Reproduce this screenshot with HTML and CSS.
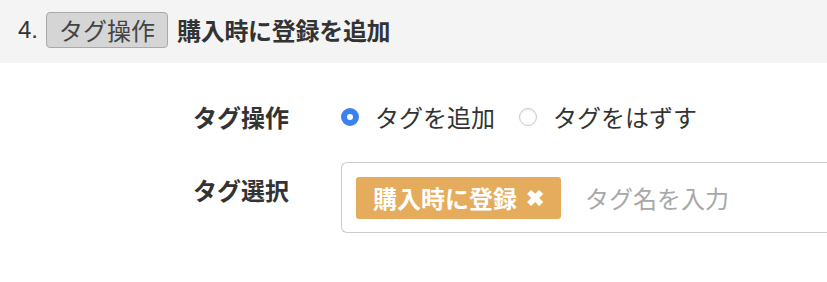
FILE: index.html
```html
<!DOCTYPE html>
<html lang="ja">
<head>
<meta charset="utf-8">
<link rel="stylesheet" href="styles.css">
</head>
<body>
<div class="header">
  <span class="num">4.</span>
  <span class="btn">タグ操作</span>
  <span class="title">購入時に登録を追加</span>
</div>
<div class="form">
  <div class="row">
    <div class="label">タグ操作</div>
    <div class="radios">
      <label class="radio"><span class="dot checked"></span>タグを追加</label>
      <label class="radio"><span class="dot"></span>タグをはずす</label>
    </div>
  </div>
  <div class="row row2">
    <div class="label label2">タグ選択</div>
    <div class="tagbox">
      <span class="chip">購入時に登録<span class="x">✖</span></span>
      <span class="placeholder">タグ名を入力</span>
    </div>
  </div>
</div>
</body>
</html>
```
FILE: styles.css
```css
html, body {
  margin: 0;
  padding: 0;
  background: #fff;
  overflow: hidden;
}
body {
  font-family: "Noto Sans CJK JP", "Noto Sans", sans-serif;
  color: #333;
  font-size: 24px;
  width: 827px;
  height: 282px;
}
.header {
  background: #f4f4f4;
  height: 63px;
  box-sizing: border-box;
  padding: 12px 0 0 18px;
  display: flex;
  align-items: flex-start;
}
.num {
  font-family: "Liberation Sans", "Noto Sans CJK JP", sans-serif;
  line-height: 36px;
  margin-right: 8px;
}
.btn {
  display: inline-block;
  height: 36px;
  line-height: 34px;
  box-sizing: border-box;
  padding: 0 12px;
  border: 1px solid #a9a9a9;
  border-radius: 4px;
  background: #d5d5d5;
  color: #444;
  margin-right: 9px;
}
.title {
  font-weight: bold;
  line-height: 36px;
  color: #333;
  letter-spacing: -0.3px;
}
.form {
  padding: 37px 0 0 193px;
}
.row {
  display: grid;
  grid-template-columns: 148px 1fr;
}
.label {
  font-weight: bold;
  line-height: 34px;
  color: #333;
}
.radios {
  display: flex;
  align-items: center;
  height: 34px;
}
.radio {
  display: flex;
  align-items: center;
  margin-right: 24px;
  line-height: 34px;
}
.dot {
  width: 18px;
  height: 18px;
  box-sizing: border-box;
  border-radius: 50%;
  border: 1px solid #c8c8c8;
  background: #fff;
  box-shadow: inset 0 1px 2px rgba(0,0,0,0.08);
  margin-right: 16px;
  flex: none;
}
.dot.checked {
  border: 6px solid #3b82f0;
  background: #fff;
  box-shadow: none;
}
.row2 {
  margin-top: 28px;
}
.label2 {
  padding-top: 11px;
}
.tagbox {
  height: 71px;
  box-sizing: border-box;
  border: 1px solid #cbcbcb;
  border-right: none;
  border-radius: 6px 0 0 6px;
  padding: 13px 14px;
  display: flex;
  align-items: center;
}
.chip {
  display: inline-flex;
  align-items: center;
  height: 42px;
  box-sizing: border-box;
  padding: 0 17px 0 17px;
  background: #e6ac5e;
  color: #fff;
  font-weight: bold;
  border-radius: 3px;
  margin-right: 24px;
}
.x {
  font-size: 22px;
  line-height: 1;
  margin-left: 9px;
  position: relative;
  top: -2px;
}
.placeholder {
  color: #a8a8a8;
}
```
